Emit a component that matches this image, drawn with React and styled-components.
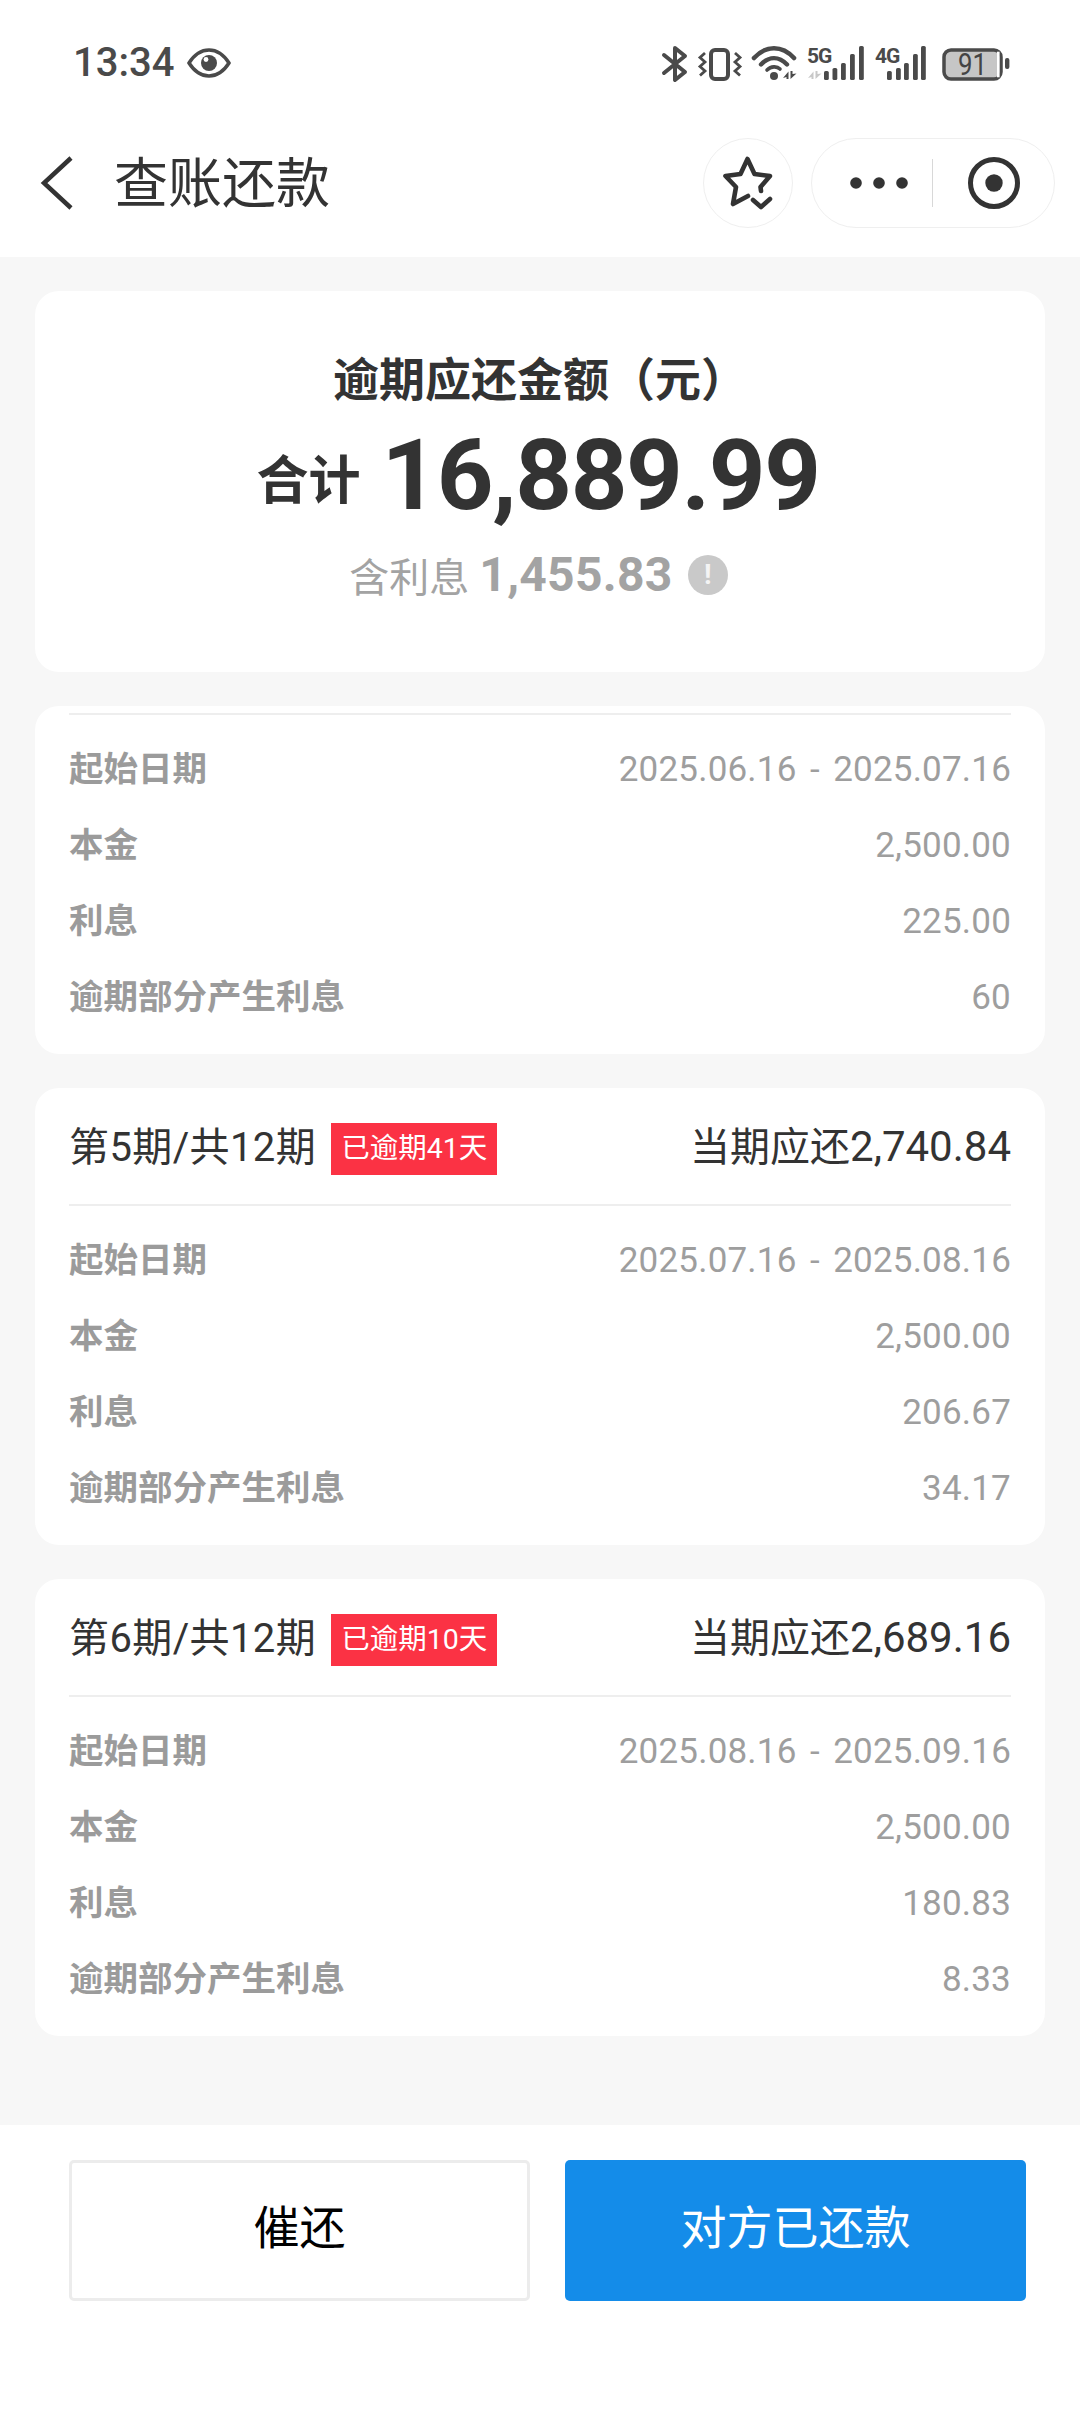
import React from "react";
import styled, { createGlobalStyle } from "styled-components";

const Global = createGlobalStyle`
  html, body { margin: 0; padding: 0; background: #f7f7f7; }
  * { box-sizing: border-box; }
  body { font-family: Roboto, "Noto Sans CJK SC", sans-serif; }
`;
const Page = styled.div`
  width: 1080px; height: 2412px; display: flex; flex-direction: column; background: #f7f7f7; overflow: hidden;
`;
const Header = styled.header`
  height: 257px; background: #fff; display: flex; flex-direction: column; flex: none;
`;
const StatusBar = styled.div`
  height: 126px; padding: 0 70px 0 73px; display: flex; align-items: center; justify-content: space-between; flex: none;
`;
const StatusLeft = styled.div`
  display: flex; align-items: center; gap: 13px; color: #4a4a4a;
`;
const Time = styled.span`
  font: 500 40px/1 Roboto, sans-serif;
`;
const StatusRight = styled.div`
  display: flex; align-items: center; color: #4a4a4a;
`;
const NavBar = styled.nav`
  flex: 1; display: flex; align-items: center; padding: 0 25px 0 40px; margin-top: -17px;
`;
const NavTitle = styled.h1`
  margin: 0 0 6px 40px; flex: 1; font: 400 54px/1 "Noto Sans CJK SC", sans-serif; color: #333;
`;
const RoundBtn = styled.div`
  width: 90px; height: 90px; border-radius: 50%; border: 1px solid #efefef; display: flex; align-items: center; justify-content: center; margin-right: 18px;
`;
const Capsule = styled.div`
  width: 244px; height: 90px; border-radius: 45px; border: 1px solid #efefef; display: flex; align-items: center;
`;
const CapsuleSide = styled.div`
  flex: 0 0 ${p => p.$width}px; display: flex; align-items: center; justify-content: center; padding-left: ${p => p.$inset || 0}px;
`;
const CapsuleLine = styled.div`
  width: 1px; height: 48px; background: #d8d8d8;
`;
const Main = styled.main`
  flex: 1; padding: 34px 35px 0; display: flex; flex-direction: column; gap: 34px;
`;
const Card = styled.section`
  background: #fff; border-radius: 24px; padding: 0 34px;
`;
const SummaryCard = styled(Card)`
  height: 381px; flex: none; display: flex; flex-direction: column; align-items: center; color: #333;
`;
const SummaryTitle = styled.div`
  margin-top: 55px; font: 700 46px/60px "Noto Sans CJK SC", sans-serif; color: #333;
`;
const TotalRow = styled.div`
  margin: 19px 4px 0 0; display: flex; align-items: baseline; gap: 21px; height: 100px;
`;
const TotalLabel = styled.span`
  font: 700 52px/1 "Noto Sans CJK SC", sans-serif; position: relative; top: -10px;
`;
const TotalValue = styled.span`
  font: 700 99px/100px Roboto, sans-serif; letter-spacing: -1.4px;
`;
const InterestRow = styled.div`
  margin: 22px 3px 0 0; display: flex; align-items: center; color: #a3a3a3; height: 56px;
`;
const InterestLabel = styled.span`
  font: 400 40px/1 "Noto Sans CJK SC", sans-serif; margin-right: 10px;
`;
const InterestValue = styled.span`
  font: 700 48px/1 Roboto, sans-serif; letter-spacing: 0.3px; margin-right: 15px;
`;
const Hint = styled.span`
  width: 40px; height: 40px; border-radius: 50%; background: #c9c9c9; color: #f4f4f4; display: flex; align-items: center; justify-content: center; font: 700 28px/1 Roboto, sans-serif;
`;
const PeriodHead = styled.div`
  height: 118px; display: flex; align-items: center; justify-content: space-between; border-bottom: 2px solid #eee;
`;
const PeriodLeft = styled.div`
  display: flex; align-items: center; gap: 15px;
`;
const PeriodTitle = styled.span`
  font: 400 40px/1 Roboto, "Noto Sans CJK SC", sans-serif; color: #333; letter-spacing: 0.4px; margin-top: 3px;
`;
const Tag = styled.span`
  width: 166px; height: 52px; margin-top: 6px; background: #fb3244; color: #fff; display: flex; align-items: center; justify-content: center; font: 400 28.5px/1 Roboto, "Noto Sans CJK SC", sans-serif;
`;
const PeriodDue = styled.span`
  font: 400 40px/1 "Noto Sans CJK SC", sans-serif; color: #333;
`;
const DueAmount = styled.span`
  font: 400 42px/1 Roboto, sans-serif;
`;
const TopRule = styled.div`
  height: 9px; border-bottom: 2px solid #eee;
`;
const Rows = styled.div`
  padding: 16px 0 19px; display: flex; flex-direction: column;
`;
const Row = styled.div`
  height: 76px; display: flex; align-items: center; justify-content: space-between;
`;
const RowLabel = styled.span`
  font: 700 34.5px/1 "Noto Sans CJK SC", sans-serif; color: #9b9b9b; margin-bottom: 5px;
`;
const RowValue = styled.span`
  font: 400 35px/1 Roboto, sans-serif; color: #9e9e9e; letter-spacing: 0.2px; word-spacing: 4.5px;
`;
const Spacer = styled.div`
  flex: 1;
`;
const Footer = styled.footer`
  height: 287px; flex: none; background: #fff; padding: 35px 54px 0 69px; display: flex; gap: 35px; align-items: flex-start;
`;
const FootBtn = styled.button`
  height: 141px; flex: 0 0 461px; border-radius: 5px; padding: 0 0 14px; font: 400 46px/1 "Noto Sans CJK SC", sans-serif;
  border: ${p => p.$primary ? "none" : "3px solid #ececec"};
  background: ${p => p.$primary ? "#148ce9" : "#fff"};
  color: ${p => p.$primary ? "#fff" : "#000"};
`;

const Back = () => (
  <svg width="34" height="54" viewBox="0 0 34 54" fill="none" stroke="#333" strokeWidth="4.5">
    <path d="M31 2 L4 27 L31 52" />
  </svg>
);
const Eye = () => (
  <svg width="44" height="30" viewBox="0 0 44 30">
    <path d="M2 15 C9 4 16 2 22 2 S35 4 42 15 C35 26 28 28 22 28 S9 26 2 15 Z" fill="none" stroke="#4a4a4a" strokeWidth="3.5" />
    <circle cx="22" cy="15" r="8" fill="#4a4a4a" />
    <circle cx="19" cy="11.5" r="2.4" fill="#fff" />
  </svg>
);
const barX5 = [164, 172.5, 181, 190, 199];
const barX4 = [227, 236, 244, 253, 261];
const barTops = [30, 27, 22, 13, 5];
const Bars = ({ xs }) => xs.map((x, i) => (
  <rect key={x} x={x} y={barTops[i]} width="4.8" height={39 - barTops[i]} rx="1.6" />
));
const StatusIcons = () => (
  <svg width="350" height="44" viewBox="0 0 350 44" fill="#4a4a4a">
    <path d="M4 14 L25 31 L15 39 V7 L25 15 L4 32" fill="none" stroke="#4a4a4a" strokeWidth="4" strokeLinejoin="round" strokeLinecap="round" />
    <rect x="51" y="9" width="17" height="29" rx="4" fill="none" stroke="#4a4a4a" strokeWidth="4" />
    <path d="M45 12 L40 16.5 L45 21 L40 25.5 L45 30 L40 34.5 M75 12 L80 16.5 L75 21 L80 25.5 L75 30 L80 34.5" fill="none" stroke="#4a4a4a" strokeWidth="2.8" />
    <path d="M94 17 C106 4 122 4 134 17" fill="none" stroke="#4a4a4a" strokeWidth="4.6" strokeLinecap="round" />
    <path d="M101 23.5 C109 15 119 15 127 23.5" fill="none" stroke="#4a4a4a" strokeWidth="4.4" strokeLinecap="round" />
    <path d="M107 29 C111 25 117 25 120 28" fill="none" stroke="#4a4a4a" strokeWidth="3.6" strokeLinecap="round" />
    <circle cx="114" cy="35" r="4" />
    <path d="M123 37 L128.5 30.5 V38 H126.5 V36 Z M130.5 30 H132.5 V33 L136.5 32.5 L130.5 38 Z" />
    <text x="147" y="22" fontFamily="Roboto, sans-serif" fontWeight="700" fontSize="21" letterSpacing="-1">5G</text>
    <path d="M148 37 L153.5 30.5 V38 H151.5 V36 Z M155.5 30 H157.5 V33 L161.5 32.5 L155.5 38 Z" fill="#c8c8c8" />
    <Bars xs={barX5} />
    <text x="215" y="22" fontFamily="Roboto, sans-serif" fontWeight="700" fontSize="21" letterSpacing="-1">4G</text>
    <Bars xs={barX4} />
    <rect x="284" y="9" width="57" height="29" rx="7" fill="#c6c6c6" stroke="#4a4a4a" strokeWidth="3.5" />
    <rect x="337" y="10.7" width="2.6" height="25.6" fill="#fff" />
    <text x="298" y="34" fontFamily="Roboto, sans-serif" fontSize="32" textLength="29" lengthAdjust="spacingAndGlyphs" fill="#444">91</text>
    <rect x="345" y="17" width="4.4" height="11" rx="2" />
  </svg>
);
const StarCheck = () => (
  <svg width="50" height="54" viewBox="0 0 50 54" fill="none" stroke="#333" strokeWidth="4.6" strokeLinejoin="round" strokeLinecap="round">
    <path d="M25 40 L10 48 L13 31 L2.5 20 L17.5 18 L24.5 3 L31.5 18 L47 20 L37.5 31 L38 35" />
    <path d="M30 44 L38 51 L47 43" />
  </svg>
);
const Dots = () => (
  <svg width="58" height="14" viewBox="0 0 58 14" fill="#333">
    <circle cx="6" cy="7" r="5.8" /><circle cx="29" cy="7" r="5.8" /><circle cx="52" cy="7" r="5.8" />
  </svg>
);
const Target = () => (
  <svg width="54" height="54" viewBox="0 0 54 54">
    <circle cx="27" cy="27" r="23.5" fill="none" stroke="#333" strokeWidth="5" />
    <circle cx="27" cy="27" r="8.7" fill="#333" />
  </svg>
);

const periods = [
  { rule: true, rows: ["2025.06.16 - 2025.07.16", "2,500.00", "225.00", "60"] },
  { title: "第5期/共12期", tag: "已逾期41天", due: "2,740.84", rows: ["2025.07.16 - 2025.08.16", "2,500.00", "206.67", "34.17"] },
  { title: "第6期/共12期", tag: "已逾期10天", due: "2,689.16", rows: ["2025.08.16 - 2025.09.16", "2,500.00", "180.83", "8.33"] },
];
const labels = ["起始日期", "本金", "利息", "逾期部分产生利息"];

export default function App() {
  return (
    <Page>
      <Global />
      <Header>
        <StatusBar>
          <StatusLeft><Time>13:34</Time><Eye /></StatusLeft>
          <StatusRight><StatusIcons /></StatusRight>
        </StatusBar>
        <NavBar>
          <Back />
          <NavTitle>查账还款</NavTitle>
          <RoundBtn><StarCheck /></RoundBtn>
          <Capsule>
            <CapsuleSide $width={120} $inset={14}><Dots /></CapsuleSide>
            <CapsuleLine />
            <CapsuleSide $width={121}><Target /></CapsuleSide>
          </Capsule>
        </NavBar>
      </Header>
      <Main>
        <SummaryCard>
          <SummaryTitle>逾期应还金额（元）</SummaryTitle>
          <TotalRow><TotalLabel>合计</TotalLabel><TotalValue>16,889.99</TotalValue></TotalRow>
          <InterestRow><InterestLabel>含利息</InterestLabel><InterestValue>1,455.83</InterestValue><Hint>!</Hint></InterestRow>
        </SummaryCard>
        {periods.map((p, i) => (
          <Card key={i}>
            {p.rule ? <TopRule /> : (
              <PeriodHead>
                <PeriodLeft><PeriodTitle>{p.title}</PeriodTitle><Tag>{p.tag}</Tag></PeriodLeft>
                <PeriodDue>当期应还<DueAmount>{p.due}</DueAmount></PeriodDue>
              </PeriodHead>
            )}
            <Rows>
              {labels.map((l, j) => (
                <Row key={l}><RowLabel>{l}</RowLabel><RowValue>{p.rows[j]}</RowValue></Row>
              ))}
            </Rows>
          </Card>
        ))}
        <Spacer />
      </Main>
      <Footer>
        <FootBtn>催还</FootBtn>
        <FootBtn $primary>对方已还款</FootBtn>
      </Footer>
    </Page>
  );
}
